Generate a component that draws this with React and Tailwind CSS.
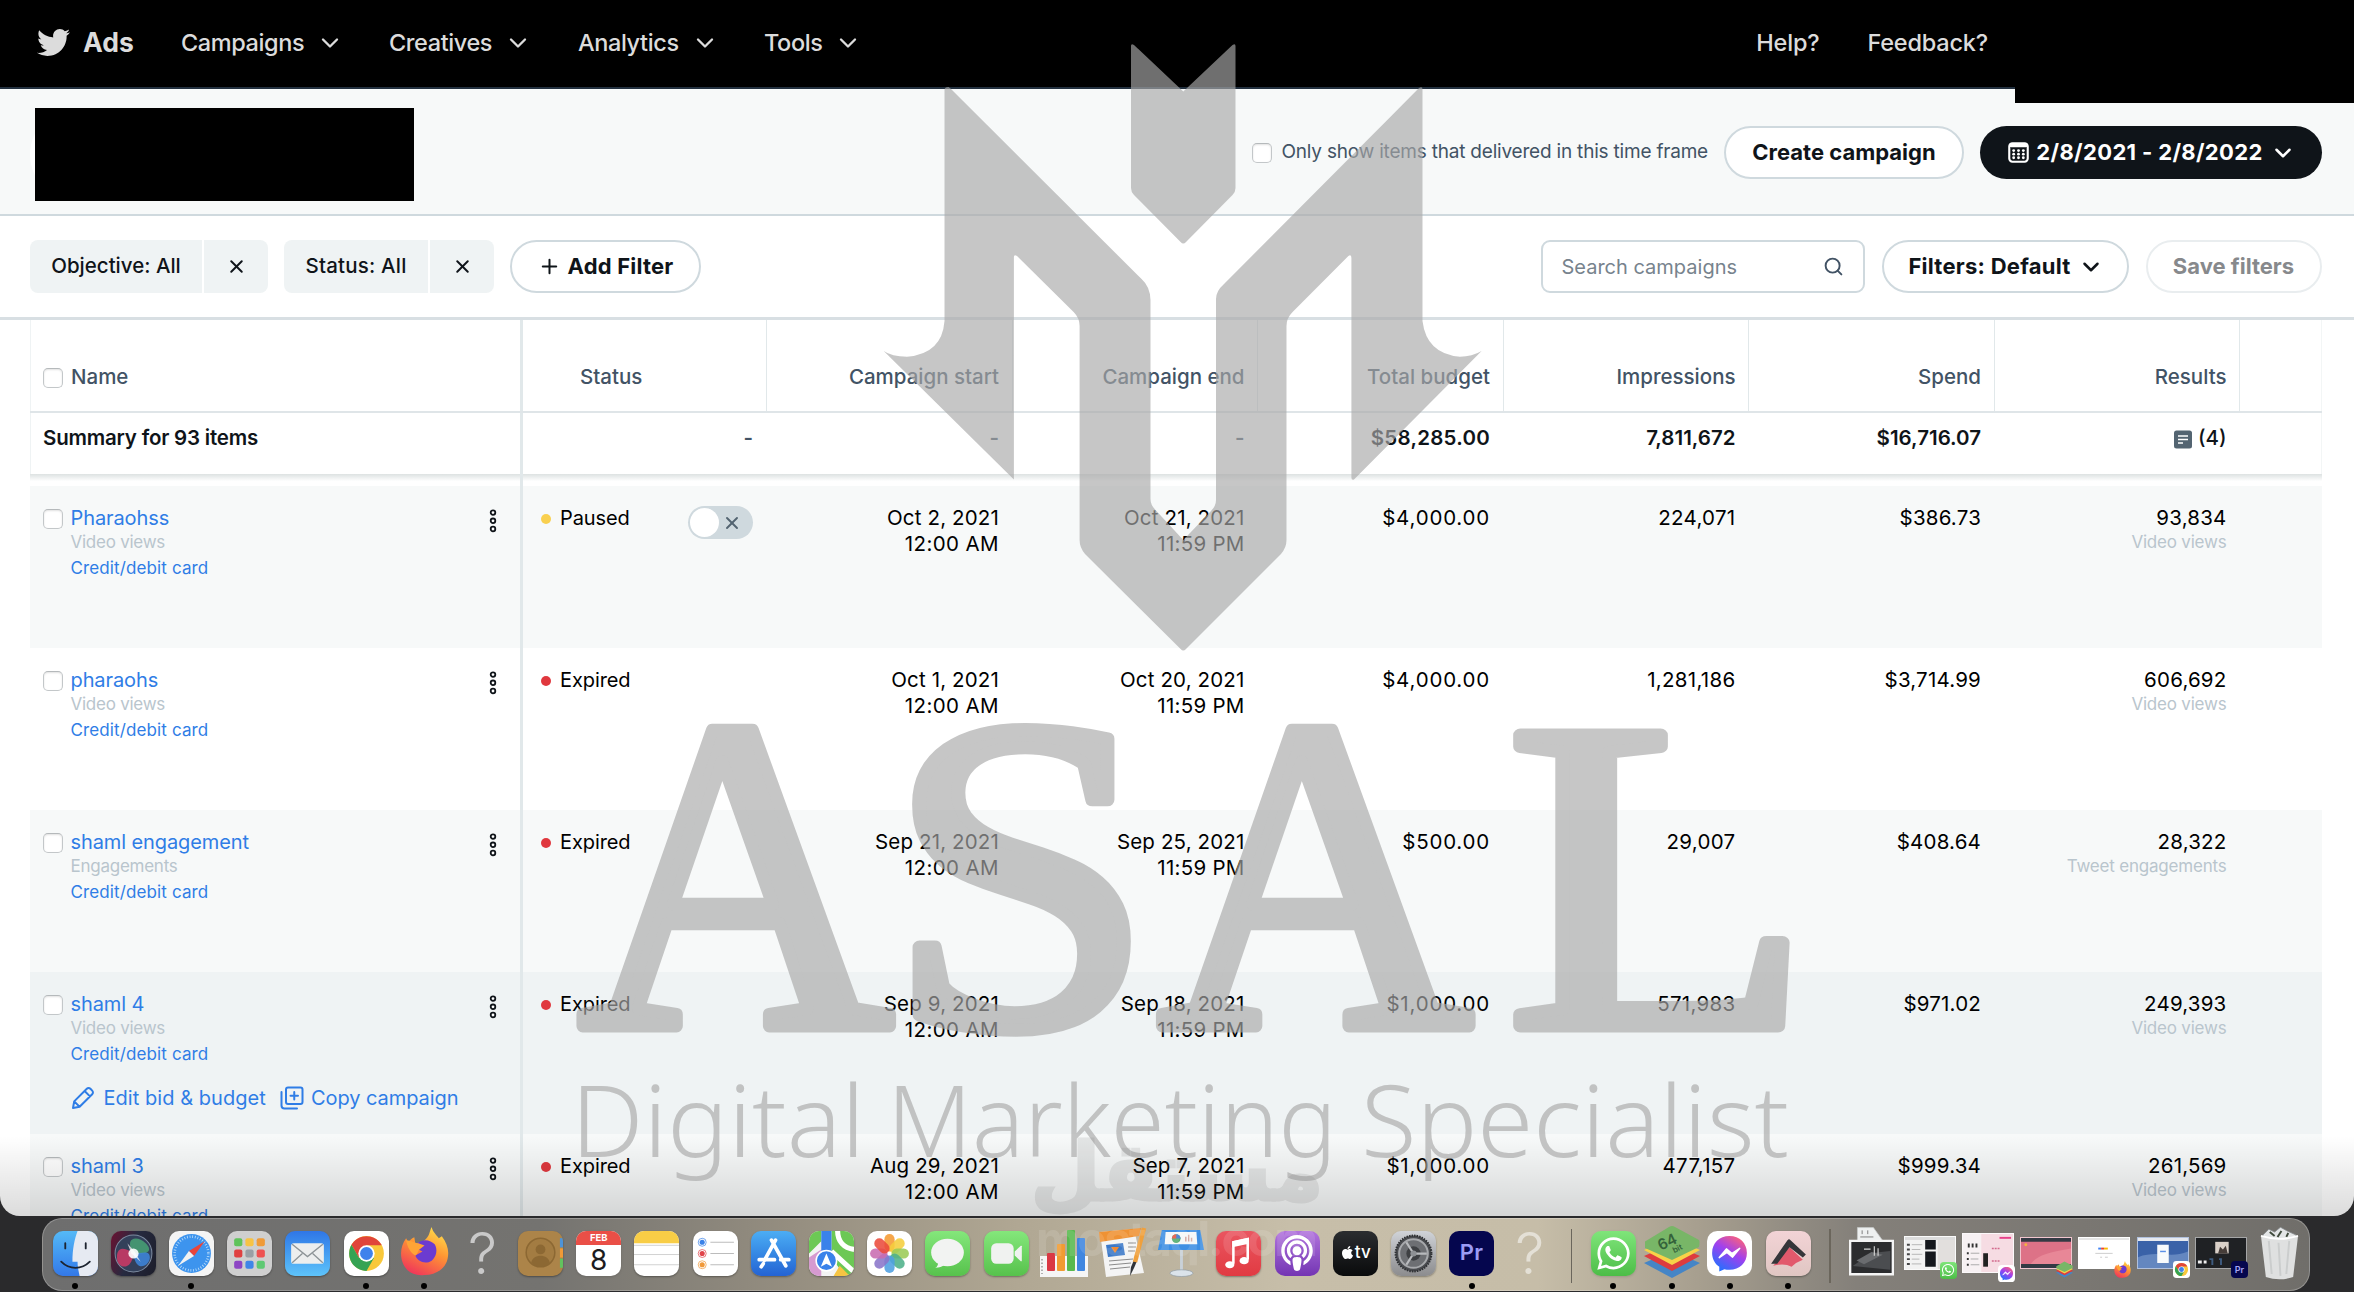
import { ChevronDown, Plus, Search, X } from 'lucide-react';
import { FaTwitter, FaWhatsapp, FaApple, FaPodcast } from 'react-icons/fa';

const campaigns = [
  { name: 'Pharaohss', objective: 'Video views', status: 'Paused', start: 'Oct 2, 2021', end: 'Oct 21, 2021', budget: '$4,000.00', impressions: '224,071', spend: '$386.73', results: '93,834' },
  { name: 'pharaohs', objective: 'Video views', status: 'Expired', start: 'Oct 1, 2021', end: 'Oct 20, 2021', budget: '$4,000.00', impressions: '1,281,186', spend: '$3,714.99', results: '606,692' },
  { name: 'shaml engagement', objective: 'Engagements', resultType: 'Tweet engagements', status: 'Expired', start: 'Sep 21, 2021', end: 'Sep 25, 2021', budget: '$500.00', impressions: '29,007', spend: '$408.64', results: '28,322' },
  { name: 'shaml 4', objective: 'Video views', status: 'Expired', start: 'Sep 9, 2021', end: 'Sep 18, 2021', budget: '$1,000.00', impressions: '571,983', spend: '$971.02', results: '249,393', hovered: true },
  { name: 'shaml 3', objective: 'Video views', status: 'Expired', start: 'Aug 29, 2021', end: 'Sep 7, 2021', budget: '$1,000.00', impressions: '477,157', spend: '$999.34', results: '261,569' },
];

const headers = ['Campaign start', 'Campaign end', 'Total budget', 'Impressions', 'Spend', 'Results'];

function Checkbox() {
  return <span className="block w-[20px] h-[20px] shrink-0 rounded-[5px] border border-[#c3c7c9] border-t-[#b5b9bb] bg-white shadow-[inset_0_1px_2px_rgba(0,0,0,0.12)]" />;
}

/* ---------- Top navigation ---------- */

function NavItem({ label, className }) {
  return (
    <div className={`flex items-center justify-between ${className}`}>
      <span>{label}</span>
      <ChevronDown className="w-[28px] h-[28px] -mr-[5px]" strokeWidth={2} />
    </div>
  );
}

function TopNav() {
  return (
    <nav className="h-[89px] shrink-0 bg-black flex items-start text-[#dcdcdc] text-[23.5px] font-medium tracking-[-0.4px] border-b-2 border-[#22303f]">
      <div className="h-[85px] w-full flex items-center pl-[37px]">
        <FaTwitter className="w-[33px] h-[33px]" />
        <span className="ml-[13px] w-[98px] text-[26.5px] font-bold tracking-normal">Ads</span>
        <NavItem label="Campaigns" className="w-[158px] mr-[50px]" />
        <NavItem label="Creatives" className="w-[138px] mr-[51px]" />
        <NavItem label="Analytics" className="w-[136px] mr-[50px]" />
        <NavItem label="Tools" className="w-[93px]" />
        <div className="ml-auto mr-[366px] flex gap-[48px] tracking-[-0.2px]">
          <span>Help?</span>
          <span>Feedback?</span>
        </div>
      </div>
    </nav>
  );
}

/* ---------- Account bar ---------- */

function CalendarIcon() {
  return (
    <svg viewBox="0 0 20 20" className="w-[21px] h-[21px]">
      <rect x="1.2" y="1.2" width="17.6" height="17.6" rx="3" fill="none" stroke="#fff" strokeWidth="2" />
      <rect x="1" y="1" width="18" height="4" rx="2" fill="#fff" />
      {[8.2, 11.6, 15].map((y) =>
        [5.4, 10, 14.6].map((x) => <circle key={`${x}-${y}`} cx={x} cy={y} r="1.35" fill="#fff" />)
      )}
    </svg>
  );
}

function AccountBar() {
  return (
    <div className="h-[127px] shrink-0 bg-[#f7f9f9] border-b-2 border-[#cfd9de] flex items-start">
      <div className="w-[384px] mt-[19px] ml-[30px] h-[93px] rounded-l-full bg-white pl-[5px]">
        <div className="w-[379px] h-[93px] bg-black" />
      </div>
      <div className="ml-auto flex items-center pt-[37px] pr-[32px]">
        <Checkbox />
        <span className="ml-[9px] mr-[16px] text-[19px] tracking-[-0.2px] text-[#425365] whitespace-nowrap">
          Only show items that delivered in this time frame
        </span>
        <button className="w-[240px] h-[53px] rounded-full border-2 border-[#cfd9de] bg-white text-[22px] font-bold text-[#0f1419]">
          Create campaign
        </button>
        <button className="ml-[16px] w-[342px] h-[53px] rounded-full bg-[#0f1419] text-white text-[22px] font-bold tracking-[0.35px] flex items-center justify-center gap-[7px] whitespace-nowrap">
          <CalendarIcon />
          2/8/2021 - 2/8/2022
          <ChevronDown className="w-[26px] h-[26px] -mr-[2px]" strokeWidth={2.3} />
        </button>
      </div>
    </div>
  );
}

/* ---------- Filter bar ---------- */

function FilterChip({ label, className }) {
  return (
    <div className="flex gap-[2px] h-[53px] mr-[16px] text-[20.5px] font-medium text-[#0f1419]">
      <div className={`rounded-l-[8px] bg-[#eff3f4] flex items-center justify-center ${className}`}>{label}</div>
      <div className="w-[64px] rounded-r-[8px] bg-[#eff3f4] flex items-center justify-center">
        <X className="w-[21px] h-[21px]" strokeWidth={2.3} />
      </div>
    </div>
  );
}

function FilterBar() {
  return (
    <div className="h-[104px] shrink-0 border-b-[3px] border-[#d8dfe3] bg-white flex items-center pl-[30px] pr-[32.5px]">
      <FilterChip label="Objective: All" className="w-[172px]" />
      <FilterChip label="Status: All" className="w-[144px] tracking-[0.2px]" />
      <button className="w-[191px] h-[53px] rounded-full border-2 border-[#cfd9de] text-[22px] font-bold tracking-[0.2px] text-[#0f1419] flex items-center justify-center gap-[7px]">
        <Plus className="w-[23px] h-[23px]" strokeWidth={2.1} />
        Add Filter
      </button>
      <div className="ml-auto w-[324px] h-[53px] rounded-[9px] border-2 border-[#cfd9de] flex items-center justify-between pl-[19px] pr-[19px] text-[20px] text-[#77838d]">
        Search campaigns
        <Search className="w-[21px] h-[21px] text-[#425365]" strokeWidth={2.2} />
      </div>
      <button className="ml-[17px] w-[247px] h-[53px] rounded-full border-2 border-[#cfd9de] text-[22px] font-bold tracking-[0.25px] text-[#0f1419] flex items-center justify-center gap-[7px]">
        Filters: Default
        <ChevronDown className="w-[26px] h-[26px] -mr-[2px]" strokeWidth={2.3} />
      </button>
      <button className="ml-[17px] w-[176px] h-[53px] rounded-full border-2 border-[#e9edef] text-[22px] font-bold text-[#87898c]">
        Save filters
      </button>
    </div>
  );
}

/* ---------- Campaign table ---------- */

function KebabIcon() {
  return (
    <svg viewBox="0 0 8 24" className="w-[8px] h-[24px]" fill="#fff" stroke="#0f1419" strokeWidth="1.8">
      <circle cx="4" cy="3.6" r="2.3" />
      <circle cx="4" cy="11.8" r="2.3" />
      <circle cx="4" cy="20" r="2.3" />
    </svg>
  );
}

function PencilIcon() {
  return (
    <svg viewBox="0 0 24 24" className="w-[24px] h-[24px]" fill="none" stroke="currentColor" strokeWidth="2" strokeLinejoin="round">
      <path d="M2 22l1.2-6.6L15.8 2.8c1-1 2.600-1 3.600 0l1.800 1.800c1 1 1 2.600 0 3.600L8.600 20.800 2 22zM13.600 5l5.400 5.400M3.200 15.400l5.400 5.400" />
    </svg>
  );
}

function CopyIcon() {
  return (
    <svg viewBox="0 0 24 24" className="w-[24px] h-[24px]" fill="none" stroke="currentColor" strokeWidth="2" strokeLinecap="round">
      <rect x="6" y="1.500" width="16.500" height="16.500" rx="2" />
      <path d="M14.250 6v7.500M10.500 9.750h7.500M1.500 6v13.500a3 3 0 0 0 3 3H17" />
    </svg>
  );
}

function Toggle() {
  return (
    <div className="ml-auto mt-px w-[65px] h-[33px] rounded-full bg-[#cfd9de] flex items-center p-[2px]">
      <div className="w-[29px] h-[29px] rounded-full bg-white" />
      <X className="ml-[3px] w-[20px] h-[20px] text-[#536471]" strokeWidth={2.3} />
    </div>
  );
}

function HeaderRow() {
  return (
    <div className="h-[93px] shrink-0 flex text-[20.5px] leading-[26px] font-medium text-[#425365] border-b-2 border-[#dfe5e8]">
      <div className="w-[493px] shrink-0 border-r-[3px] border-[#e1e8ea] border-l border-l-[#eff3f4] pl-[12px] pt-[44px] flex gap-[8px]">
        <div className="pt-[4px]"><Checkbox /></div>
        Name
      </div>
      <div className="w-[244px] shrink-0 border-r border-[#e1e8ea] pl-[57px] pt-[44px]">Status</div>
      {headers.map((h) => (
        <div key={h} className="w-[245.5px] shrink-0 border-r border-[#e1e8ea] pr-[12.5px] pt-[44px] text-right">{h}</div>
      ))}
      <div className="flex-1 border-r border-[#f3f6f6]" />
    </div>
  );
}

function NoteIcon() {
  return (
    <svg viewBox="0 0 18 18" className="w-[18px] h-[19px] mt-[5px]">
      <rect width="18" height="18" rx="2.500" fill="#536471" />
      <path d="M4 5.500h10M4 9h10M4 12.500h5" stroke="#fff" strokeWidth="1.500" />
    </svg>
  );
}

function SummaryRow() {
  const cell = 'w-[245.5px] shrink-0 pr-[13.5px] pt-[12px] text-right';
  return (
    <div className="h-[61px] shrink-0 flex text-[20.5px] leading-[26px] font-semibold text-[#0f1419]">
      <div className="w-[493px] shrink-0 border-r-[3px] border-[#e1e8ea] border-l border-l-[#eff3f4] pl-[12px] pt-[12px] tracking-[-0.2px]">
        Summary for 93 items
      </div>
      <div className="w-[244px] shrink-0 pr-[14px] pt-[12px] text-right text-[#425365]">-</div>
      <div className={`${cell} text-[#425365]`}>-</div>
      <div className={`${cell} text-[#425365]`}>-</div>
      <div className={`${cell} tracking-[0.25px]`}>$58,285.00</div>
      <div className={cell}>7,811,672</div>
      <div className={cell}>$16,716.07</div>
      <div className={`${cell} flex justify-end gap-[6px] font-medium`}>
        <NoteIcon />
        (4)
      </div>
      <div className="flex-1 border-r border-[#f3f6f6]" />
    </div>
  );
}

function CampaignRow({ c, index }) {
  const bg = c.hovered ? 'bg-[#eff3f4]' : index % 2 === 0 ? 'bg-[#f7f9f9]' : 'bg-white';
  const cell = 'w-[245.5px] shrink-0 pr-[13.5px] pt-[19px] text-right';
  return (
    <div className={`h-[162px] shrink-0 flex text-[20.5px] leading-[26px] text-black ${bg}`}>
      <div className="w-[493px] h-full shrink-0 border-r-[3px] border-[#e1e8ea] pl-[13px] pr-[23px] pt-[19px] flex items-start">
        <div className="pt-[4px]"><Checkbox /></div>
        <div className="ml-[7.5px] flex-1 text-[#2f7de6] tracking-[-0.1px]">
          <div className="text-[20px] leading-[26px]">{c.name}</div>
          <div className="text-[17px] leading-[22px] tracking-[-0.25px] text-[#b9c5cd]">{c.objective}</div>
          <div className="mt-[2px] text-[17px] leading-[26px] tracking-[0.12px]">Credit/debit card</div>
          {c.hovered && (
            <div className="mt-[18px] flex items-center text-[20px] leading-[26px] tracking-[0.05px] whitespace-nowrap">
              <PencilIcon />
              <span className="ml-[9px] mr-[14px]">Edit bid &amp; budget</span>
              <CopyIcon />
              <span className="ml-[7px] tracking-[-0.05px]">Copy campaign</span>
            </div>
          )}
        </div>
        <div className="-ml-[8px] pt-[4px]"><KebabIcon /></div>
      </div>
      <div className="w-[244px] shrink-0 pl-[18px] pr-[14px] pt-[19px] flex items-start">
        <span className={`mt-[9px] w-[10px] h-[10px] rounded-full ${c.status === 'Paused' ? 'bg-[#f9d04f]' : 'bg-[#e0383e]'}`} />
        <span className="ml-[9px] text-[20px] tracking-[-0.1px]">{c.status}</span>
        {c.status === 'Paused' && <Toggle />}
      </div>
      <div className={`${cell} tracking-[0.15px]`}>
        {c.start}
        <div className="tracking-[0.4px]">12:00 AM</div>
      </div>
      <div className={`${cell} tracking-[0.15px]`}>
        {c.end}
        <div className="tracking-[0.25px]">11:59 PM</div>
      </div>
      <div className={`${cell} tracking-[0.8px]`}>{c.budget}</div>
      <div className={`${cell} tracking-[0.3px]`}>{c.impressions}</div>
      <div className={`${cell} tracking-[0.2px]`}>{c.spend}</div>
      <div className={`${cell} tracking-[0.2px]`}>
        {c.results}
        <div className="text-[17px] leading-[22px] tracking-[-0.2px] text-[#b9c5cd]">{c.resultType || c.objective}</div>
      </div>
    </div>
  );
}

/* ---------- Dock ---------- */

function DockItem({ running, children }) {
  return (
    <div className="w-[58.2px] shrink-0 flex flex-col items-center pt-[11px]">
      <div className="h-[46px] flex items-center justify-center">{children}</div>
      {running && <span className="mt-[7px] w-[6px] h-[6px] rounded-full bg-black" />}
    </div>
  );
}

function Tile({ className, children }) {
  return (
    <div className={`w-[45px] h-[45px] rounded-[10px] overflow-hidden shadow-[0_1px_2px_rgba(0,0,0,0.35)] ${className}`}>
      {children && <svg viewBox="0 0 44 44" className="w-full h-full">{children}</svg>}
    </div>
  );
}

function Separator() {
  return (
    <div className="w-[25.5px] shrink-0 flex justify-center pt-[10px]">
      <span className="w-[1.5px] h-[54px] bg-[#6b665c]" />
    </div>
  );
}

function Chrome({ x = 22, y = 22, r = 17 }) {
  return (
    <g transform={`translate(${x} ${y}) scale(${r / 17})`}>
      <circle r="17" fill="#f9c83b" />
      <path d="M-14.700-8.500A17 17 0 0 1 14.700-8.500L14.700-8H0L-7.400 4.200z" fill="#e0453a" />
      <path d="M-14.700-8.500A17 17 0 0 0 0 17L7.400 4.200H-7.400z" fill="#35a353" />
      <circle r="8" fill="#fff" />
      <circle r="6.300" fill="#3f82ec" />
    </g>
  );
}

function Firefox({ className }) {
  return (
    <svg viewBox="0 0 48 50" className={className}>
      <defs>
        <linearGradient id="ffx" x1="0.8" y1="0" x2="0.3" y2="1">
          <stop offset="0" stopColor="#ffe14d" />
          <stop offset="0.45" stopColor="#ff9633" />
          <stop offset="1" stopColor="#f0365a" />
        </linearGradient>
      </defs>
      <path d="M31 1c1 5 5 8 7 11l3-2c5 7 7 13 6 20-1 11-11 18-23 18C10 50 1 40 1 27c0-6 2-11 5-15l2 4c2-2 3-4 6-5l1 6c5-1 8-1 11-5 3-3 3-7 5-11z" fill="url(#ffx)" />
      <path d="M17 17c6-5 13-3 17 1 3 5 2 12-3 16-6 4-14 1-16-5l7-4-4-2z" fill="#6b3bd0" />
      <path d="M6 14c5 0 8 3 12 3l6 2-5 4c-2 2-1 4-4 6-4-2-8-8-9-15z" fill="#ffa436" />
    </svg>
  );
}

function BlueStacks({ className, label }) {
  return (
    <svg viewBox="0 0 56 52" className={className}>
      <path d="M0 37l28-12 28 12-28 15z" fill="#4585c6" />
      <path d="M0 30l28-12 28 12-28 15z" fill="#dd3c3f" />
      <path d="M0 24l28-12 28 12-28 15z" fill="#f8d248" />
      <path d="M1 15.500L25 1q3-2 6 0l24 13q1 1.500 0 7L28 34 1 22z" fill="#78b667" />
      {label && (
        <g transform="rotate(-26 28 16)" fill="#34623a" fontFamily="Inter" fontWeight="600">
          <text x="14" y="19" fontSize="15">64</text>
          <text x="25" y="27" fontSize="8">bit</text>
        </g>
      )}
    </svg>
  );
}

function Messenger({ className }) {
  return (
    <svg viewBox="0 0 44 44" className={className}>
      <defs>
        <linearGradient id="msgr" x1="0.2" y1="1" x2="0.8" y2="0">
          <stop offset="0" stopColor="#1b74ff" />
          <stop offset="0.55" stopColor="#a040ee" />
          <stop offset="1" stopColor="#ff6376" />
        </linearGradient>
      </defs>
      <rect width="44" height="44" rx="10" fill="#fff" />
      <path d="M22 5c10 0 17 7 17 16.500S32 38 22 38c-2 0-3.500-.3-5-.7L12 39.500V35C7.500 32 5 27 5 21.500 5 12 12 5 22 5z" fill="url(#msgr)" />
      <path d="M12 26l7-8.500 5.500 4.500L32 17l-7 8.500-5.500-4.500z" fill="#fff" stroke="#fff" strokeWidth="1.500" strokeLinejoin="round" />
    </svg>
  );
}

function Whatsapp({ className, icon }) {
  return (
    <div className={`rounded-[22%] bg-gradient-to-b from-[#7fe57a] to-[#4cbd47] flex items-center justify-center ${className}`}>
      <FaWhatsapp className={`text-white ${icon}`} />
    </div>
  );
}

// Minimised window with the badge of the app that owns it
function Thumb({ className, children, badge }) {
  return (
    <div className="relative">
      <div className={`w-[52px] overflow-hidden border border-white/60 ${className}`}>{children}</div>
      <div className="absolute -right-px -bottom-[9px] w-[17px] h-[18px] flex items-center justify-center">{badge}</div>
    </div>
  );
}

const petals = ['#f59b33', '#f5ce3e', '#9bcb57', '#4fb08a', '#4f9fe0', '#8a75c9', '#c86bb0', '#ea4b3c'];
const pads = ['#5fc35a', '#f7c344', '#f09a37', '#e04141', '#9a9fa5', '#ee5252', '#8e46c4', '#3f86e8', '#5fc973'];

function Dock() {
  return (
    <div className="h-[76px] px-[42px] pt-[2px]">
      <div className="w-[2268px] h-[73px] rounded-[20px] border border-white/25 pl-[3px] flex bg-[linear-gradient(90deg,#6e6e6e_0%,#747370_22%,#958e80_33%,#b0a793_43%,#c7bea9_55%,#c6bda8_66%,#a79f8f_73%,#84807a_80%,#706e6a_100%)]">
        <DockItem running>
          <Tile className="bg-gradient-to-b from-[#55b9f7] to-[#3478e8]">
            <path d="M24 0h20v44H26c-1-5-2-9-2-14h-5C19 18 21 8 24 0z" fill="#e6eaf2" />
            <path d="M12 12v5M32 12v5M8 30c8 8 20 8 28 0" stroke="#1d2430" strokeWidth="1.800" fill="none" strokeLinecap="round" />
          </Tile>
        </DockItem>
        <DockItem>
          <Tile className="bg-[linear-gradient(110deg,#6b1231,#262a40_45%,#1c1d2a)]">
            <circle cx="22" cy="22" r="18" fill="#33405a" stroke="#7d8ba0" strokeWidth="1" />
            <path d="M22 22C8 12 5 20 6 28s14 12 16-6z" fill="#d03a66" opacity="0.85" />
            <path d="M22 22C12 6 26 4 34 12s0 12-12 10z" fill="#49a777" opacity="0.8" />
            <path d="M22 22c8 0 16-4 16 4s-14 16-16-4z" fill="#3d83d6" opacity="0.9" />
            <circle cx="22" cy="22" r="5" fill="#fff" opacity="0.9" />
            <path d="M16 12l7 8 6 10-9-8z" fill="#fff" opacity="0.7" />
          </Tile>
        </DockItem>
        <DockItem running>
          <Tile className="bg-[#f4f4f4]">
            <circle cx="22" cy="22" r="19" fill="#3d94ee" />
            <circle cx="22" cy="22" r="16.500" fill="none" stroke="#b9dcfa" strokeWidth="2.500" strokeDasharray="0.8 1.800" />
            <path d="M35 10L24.500 24.500 19.500 19.500z" fill="#e8453c" />
            <path d="M9 34l10.500-14.500 5 5z" fill="#f2f2f2" />
          </Tile>
        </DockItem>
        <DockItem>
          <Tile className="bg-[#cfcfcf]">
            {pads.map((p, i) => (
              <rect key={i} x={7 + (i % 3) * 11} y={7 + Math.floor(i / 3) * 11} width="8" height="8" rx="2" fill={p} />
            ))}
          </Tile>
        </DockItem>
        <DockItem>
          <Tile className="bg-gradient-to-b from-[#3076e6] to-[#5ec3fa]">
            <rect x="6" y="12" width="32" height="20" rx="2.500" fill="#eceeee" />
            <path d="M7 13l15 12 15-12M7 31l10-9M37 31l-10-9" fill="none" stroke="#8d9497" strokeWidth="1.300" />
          </Tile>
        </DockItem>
        <DockItem running>
          <Tile className="bg-white"><Chrome /></Tile>
        </DockItem>
        <DockItem running><Firefox className="w-[49px] h-[51px] -mt-[3px]" /></DockItem>
        <DockItem><span className="text-[58px] leading-[46px] font-light text-[#c9c9c9]">?</span></DockItem>
        <DockItem>
          <Tile className="bg-[#ac8449]">
            <rect x="41" y="7" width="3" height="9" fill="#4d93d9" />
            <rect x="41" y="17" width="3" height="9" fill="#f09a37" />
            <rect x="41" y="27" width="3" height="9" fill="#62c25e" />
            <circle cx="22" cy="21" r="14" fill="#a37c42" stroke="#8c6833" strokeWidth="1.500" />
            <circle cx="22" cy="18" r="4.800" fill="#8c6833" />
            <path d="M13 31c1-9 17-9 18 0-5 5-13 5-18 0z" fill="#8c6833" />
          </Tile>
        </DockItem>
        <DockItem>
          <div className="w-[45px] h-[45px] rounded-[10px] overflow-hidden bg-white flex flex-col items-center shadow">
            <div className="w-full h-[14px] bg-[#ea4f47] text-white text-[9.500px] leading-[14px] font-bold text-center">FEB</div>
            <div className="text-[28px] leading-[31px] text-[#1c1c1e]">8</div>
          </div>
        </DockItem>
        <DockItem>
          <Tile className="bg-white">
            <rect width="44" height="12" fill="#f8cd46" />
            <path d="M0 14h44M0 23h44M0 33h44" stroke="#c8c8c8" strokeWidth="0.800" />
          </Tile>
        </DockItem>
        <DockItem>
          <Tile className="bg-white">
            {['#3b82e8', '#e0444a', '#f0993a'].map((f, i) => (
              <g key={f}>
                <circle cx="9" cy={11 + i * 11} r="2.500" fill={f} />
                <circle cx="9" cy={11 + i * 11} r="3.900" fill="none" stroke={f} strokeWidth="0.700" />
                <path d={`M17 ${11 + i * 11}h23`} stroke="#bcbcbc" strokeWidth="1.200" />
              </g>
            ))}
          </Tile>
        </DockItem>
        <DockItem>
          <Tile className="bg-gradient-to-b from-[#4cadf4] to-[#2563d3]">
            <path d="M24 9L13 29M20 9l14 25M8 28h15M29 28h8M12 32l-2 3" stroke="#fff" strokeWidth="3.600" strokeLinecap="round" />
          </Tile>
        </DockItem>
        <DockItem>
          <Tile className="bg-[#f3f3f3]">
            <path d="M0 0h12v10L0 22zM22 0h22v44h-9L22 26z" fill="#6cc855" />
            <path d="M0 44V26l12-8v26z" fill="#d69ad0" />
            <path d="M24 44l6-10 10 10z" fill="#f6c443" />
            <path d="M12 0h10v22H12z" fill="#3a82ea" />
            <path d="M22 20L44 40M28 0c0 10 6 17 16 18" stroke="#fff" strokeWidth="5" fill="none" />
            <circle cx="17" cy="29" r="10" fill="#3a82ea" stroke="#fff" strokeWidth="1.500" />
            <path d="M17 22l5.500 13-5.500-3-5.500 3z" fill="#fff" />
          </Tile>
        </DockItem>
        <DockItem>
          <Tile className="bg-white">
            {petals.map((p, i) => (
              <rect key={p} x="17" y="3" width="10" height="17" rx="5" fill={p} opacity="0.88" transform={`rotate(${i * 45} 22 22)`} />
            ))}
          </Tile>
        </DockItem>
        <DockItem>
          <Tile className="bg-gradient-to-b from-[#84e77b] to-[#57c24c]">
            <ellipse cx="22" cy="21" rx="16" ry="13.500" fill="#f2f3f2" />
            <path d="M13 30c0 3-1 5-3 6 4 0 7-1 9-3z" fill="#f2f3f2" />
          </Tile>
        </DockItem>
        <DockItem>
          <Tile className="bg-gradient-to-b from-[#84e77b] to-[#57c24c]">
            <rect x="7" y="12" width="22" height="20" rx="5" fill="#f0f2f0" />
            <path d="M30 20l6-5.500q1-.5 1 .5v14q0 1-1 .5L30 24z" fill="#f0f2f0" />
          </Tile>
        </DockItem>
        <DockItem>
          <svg viewBox="0 0 50 50" className="w-[50px] h-[50px]">
            <path d="M1 28h48v21H1z" fill="#f5f5f5" />
            <path d="M3 31v15" stroke="#999" strokeWidth="1.500" strokeDasharray="1.500 2" />
            <rect x="8" y="25" width="8" height="18" rx="1" fill="#da3844" />
            <rect x="18" y="16" width="8" height="27" rx="1" fill="#f19b32" />
            <rect x="28" y="2" width="8" height="41" rx="1" fill="#58b94e" />
            <rect x="38" y="10" width="8" height="33" rx="1" fill="#3f86e0" />
          </svg>
        </DockItem>
        <DockItem>
          <svg viewBox="0 0 50 52" className="w-[50px] h-[52px]">
            <path d="M3 5l34-3 10 44-38 4z" fill="#f4f4f4" />
            <path d="M2 5l42-4-2 8-39 6z" fill="#ef9234" />
            <path d="M9 18l17-2 2 12-17 2z" fill="#3b78c8" />
            <path d="M14 20h8l-4 6z" fill="#ee8a35" />
            <path d="M31 16h8M31 20h8M31 24h7M12 34l24-2M12 38l22-2M13 42l20-2" stroke="#8b8b8b" strokeWidth="1" />
            <path d="M37 33l-3 7-1 9 4-8 3-7z" fill="#30343a" />
            <path d="M47 1L38 35" stroke="#f0a03c" strokeWidth="4.500" />
          </svg>
        </DockItem>
        <DockItem>
          <svg viewBox="0 0 50 52" className="w-[48px] h-[52px]">
            <path d="M24 20h3v27h-3z" fill="#c9d1d8" />
            <ellipse cx="25.500" cy="47" rx="12" ry="3.500" fill="#dbe3ea" stroke="#8d99a3" strokeWidth="0.700" />
            <path d="M5 2h40l4 21H1z" fill="#3e8fe3" />
            <path d="M9 4h32l1 13H8z" fill="#f5f7f8" />
            <circle cx="20" cy="11" r="4.500" fill="#4faa6b" />
            <path d="M20 11V6.500A4.500 4.500 0 0 1 24.500 11z" fill="#3878d0" />
            <path d="M20 11l-4.500 0A4.500 4.500 0 0 1 20 6.500z" fill="#e6533f" />
            <path d="M30 14V9M33 14V7M36 14v-4" stroke="#d4a8a2" strokeWidth="1.500" />
          </svg>
        </DockItem>
        <DockItem>
          <Tile className="bg-gradient-to-b from-[#ea5560] to-[#e13a42]">
            <path d="M17 32V11l14-3v20" fill="none" stroke="#fff" strokeWidth="2.500" />
            <path d="M16 10l16-3.500v6L16 16z" fill="#fff" />
            <ellipse cx="13.500" cy="33" rx="4.500" ry="3.500" fill="#fff" />
            <ellipse cx="27.500" cy="29" rx="4.500" ry="3.500" fill="#fff" />
          </Tile>
        </DockItem>
        <DockItem>
          <div className="w-[45px] h-[45px] rounded-[10px] bg-gradient-to-b from-[#b273dd] to-[#7434b3] flex items-center justify-center">
            <FaPodcast className="w-[36px] h-[36px] text-white" />
          </div>
        </DockItem>
        <DockItem>
          <div className="w-[45px] h-[45px] rounded-[10px] bg-gradient-to-b from-[#2b2d30] to-[#0a0b0c] text-white flex items-center justify-center pb-px">
            <FaApple className="w-[15px] h-[15px]" />
            <span className="text-[17px] leading-none font-medium">tv</span>
          </div>
        </DockItem>
        <DockItem>
          <Tile className="bg-gradient-to-b from-[#d0d3d8] to-[#8c8c8e]">
            <circle cx="22" cy="22" r="17.500" fill="#4a4c50" stroke="#2f3134" strokeWidth="2" strokeDasharray="1.500 1" />
            <circle cx="22" cy="22" r="14" fill="#6d6f73" stroke="#a7a9ac" strokeWidth="2" />
            <circle cx="22" cy="22" r="7" fill="#3e4043" />
            <path d="M22 22h13M22 22L15 11M22 22l-7 11" stroke="#b8babd" strokeWidth="2.200" />
            <circle cx="22" cy="22" r="3" fill="#8d9094" />
          </Tile>
        </DockItem>
        <DockItem running>
          <div className="w-[45px] h-[45px] rounded-[10px] bg-[#05064e] text-[#9a9bf5] text-[22px] leading-[43px] font-semibold text-center tracking-[0.5px]">Pr</div>
        </DockItem>
        <DockItem><span className="text-[58px] leading-[46px] font-light text-[#e4e0d6]">?</span></DockItem>

        <Separator />

        <DockItem running><Whatsapp className="w-[45px] h-[45px] shadow" icon="w-[37px] h-[37px]" /></DockItem>
        <DockItem running><BlueStacks label className="w-[56px] h-[52px] -mt-[2px]" /></DockItem>
        <DockItem running><Messenger className="w-[45px] h-[45px]" /></DockItem>
        <DockItem running>
          <Tile className="bg-gradient-to-b from-[#f2d3d6] to-[#e0c6c2]">
            <path d="M23 16l13 12q-6 2-11 7-7-4-18-1z" fill="#e2596c" />
            <path d="M5 32L21 9q1.500-2 3 0l15 14-3 3-13-10L11 32z" fill="#35363a" />
          </Tile>
        </DockItem>

        <Separator />

        <DockItem>
          <svg viewBox="0 0 48 52" className="w-[45px] h-[50px] -mt-[4px]">
            <path d="M9 1h17l10 14H9z" fill="#eef0f0" stroke="#c5c8c8" strokeWidth="0.800" />
            <path d="M14 4v4M20 4v4M12 11h14" stroke="#777" strokeWidth="1" />
            <path d="M0 14h48v38H0z" fill="#f4f4f4" />
            <path d="M2.500 16.500h43v33h-43z" fill="#2b2c2e" />
            <path d="M4 42l20-14 20-2v20z" fill="#4b4d50" />
            <path d="M8 36l16-9 12 3-20 10z" fill="#6a6c6f" />
            <path d="M16 24h7M27 21v10M31 23v8" stroke="#d8d8d8" strokeWidth="1.200" />
          </svg>
        </DockItem>
        <DockItem>
          <Thumb className="h-[34px] bg-[#f2f2f2]" badge={<Whatsapp className="w-[17px] h-[17px]" icon="w-[14px] h-[14px]" />}>
            <svg viewBox="0 0 52 34">
              <path d="M0 0h52v3H0z" fill="#dcdcdc" />
              <path d="M2 8h3M2 13h3M2 18h3M2 23h3M2 28h3" stroke="#444" strokeWidth="2" />
              <path d="M7 8h11M7 13h9M7 18h11M7 23h8M7 28h10" stroke="#b5b5b5" strokeWidth="1" />
              <path d="M21 3h11v10H21zM21 15h11v16H21z" fill="#15181d" />
              <path d="M34 3h18v31H34z" fill="#e2dfdd" />
            </svg>
          </Thumb>
        </DockItem>
        <DockItem>
          <Thumb className="h-[40px] bg-[#f7f1f3]" badge={<Messenger className="w-[17px] h-[17px]" />}>
            <svg viewBox="0 0 52 40">
              <path d="M19 0h33v40H19z" fill="#f6dce3" />
              <path d="M38 4h12" stroke="#e8408a" strokeWidth="2" />
              <path d="M6 10v4M10 10v4M14 10v4M4 20h2M4 26h2M4 32h2" stroke="#333" strokeWidth="2" />
              <path d="M8 20h9M8 26h8M8 32h9" stroke="#aaa" strokeWidth="1" />
              <path d="M21 20h5v14h-5z" fill="#222" />
              <path d="M30 15l8 0M30 28h8" stroke="#d26a8d" strokeWidth="1.500" strokeDasharray="2 1" />
            </svg>
          </Thumb>
        </DockItem>
        <DockItem>
          <Thumb className="h-[32px] bg-[#dd7287]" badge={<BlueStacks className="w-[21px] h-[19px]" />}>
            <svg viewBox="0 0 52 32">
              <path d="M0 0h52v4H0zM0 27h52v5H0z" fill="#343a44" />
              <path d="M10 27c8-10 20-12 42-16v16z" fill="#e88797" />
              <circle cx="5" cy="7" r="1.500" fill="#f5b23d" />
            </svg>
          </Thumb>
        </DockItem>
        <DockItem>
          <Thumb className="h-[32px] bg-white" badge={<Firefox className="w-[18px] h-[19px]" />}>
            <svg viewBox="0 0 52 32">
              <path d="M0 0h52v2H0z" fill="#e5e5e5" />
              <path d="M20 11h3" stroke="#4285f4" strokeWidth="2" />
              <path d="M23 11h3" stroke="#ea4335" strokeWidth="2" />
              <path d="M26 11h4" stroke="#fbbc05" strokeWidth="2" />
              <path d="M17 16h18M22 20h2M27 20h3" stroke="#ccc" strokeWidth="1" />
            </svg>
          </Thumb>
        </DockItem>
        <DockItem>
          <Thumb
            className="h-[32px] bg-[#3a62a8]"
            badge={<svg viewBox="0 0 44 44" className="w-[17px] h-[17px]"><rect width="44" height="44" rx="9" fill="#fff" /><Chrome /></svg>}
          >
            <svg viewBox="0 0 52 32">
              <path d="M0 0h52v3H0z" fill="#e6e9ef" />
              <path d="M0 20c20-8 34 2 52-6v18H0z" fill="#6487c0" />
              <path d="M20 7h12v19H20z" fill="#f8fafc" />
              <path d="M23 14h6" stroke="#5b8fe6" strokeWidth="1.500" />
            </svg>
          </Thumb>
        </DockItem>
        <DockItem>
          <Thumb
            className="h-[32px] bg-[#1f2124] border-[#55585c]"
            badge={<span className="w-[17px] h-[17px] rounded-[4px] bg-[#05064e] text-[#a5a6f6] text-[9px] leading-[17px] font-semibold text-center">Pr</span>}
          >
            <svg viewBox="0 0 52 32">
              <path d="M20 4h14v12H20z" fill="#d9d0c8" />
              <path d="M23 16l2-7 3 3 3-4 2 8z" fill="#453c38" />
              <path d="M2 25h4M8 25h3" stroke="#eee" strokeWidth="3" />
              <path d="M14 22h3v6M24 22h2v6" stroke="#3f5c80" strokeWidth="2" fill="none" />
            </svg>
          </Thumb>
        </DockItem>
        <DockItem>
          <svg viewBox="0 0 40 54" className="w-[39px] h-[53px]">
            <path d="M3 8l6-6 6 3 6-5 7 4 9 4-3 6H5z" fill="#e3e5e6" stroke="#85898b" strokeWidth="0.800" />
            <path d="M10 5l5 4M22 4l-4 6M29 6l-2 4" stroke="#3f4a3c" strokeWidth="2" />
            <path d="M1 9q19 6 38 0l-5 42q-14 5-28 0z" fill="#dfe0e0" />
            <path d="M1 9q19 6 38 0" stroke="#fff" strokeWidth="1.800" fill="none" />
            <path d="M9 14l3 34M30 14l-3 34M19 16l2 34" stroke="#cbcdcd" strokeWidth="2" />
          </svg>
        </DockItem>
      </div>
    </div>
  );
}

/* ---------- Watermark laid over the whole screen ---------- */

function Watermark() {
  return (
    <svg viewBox="0 0 2354 1292" className="absolute left-0 top-0 w-[2354px] h-[1292px] pointer-events-none">
      <g fill="#a9a9a9" opacity="0.66">
        <path d="M1131 46q0-3 3-1l49.300 46.500L1232.500 45q3-2 3 1V188q0 4-3 7L1186 242q-2.700 3-5.400 0L1134 195q-3-3-3-7z" />
        <path d="M944.500 90q0-3 4-3L951 89 1141.600 279q8.900 8 8.900 22V499q0 6 5 11L1183.300 540 1211 511q5-5 5-11V299q0-8 8-15L1418.500 88.500q4-3 4 1V321q4 33 37.500 35.700 12 0 21.600-5.700L1354 479.600q-2.600 1-2.600-2V258q0-4-3-2L1292.600 312q-6.100 6-6.100 14V540q0 8-6 14.500L1186 649q-2.700 3-5.400 0L1085.500 554.500q-5.900-6.500-5.900-14.500V326q0-8-6-14L1017 256q-3-2-3.100 1V479.600L883.700 351q8 5.700 23.300 5.700 35-2.700 37.500-35.700z" />
        <g fontFamily="Liberation Serif" fontSize="448" stroke="#a9a9a9" strokeWidth="13" strokeLinejoin="round">
          <text transform="translate(578.500 1026) scale(0.972 1)">A</text>
          <text transform="translate(887 1026) scale(1.070 1)">S</text>
          <text transform="translate(1158 1026) scale(0.972 1)">A</text>
          <text transform="translate(1506 1026) scale(1.120 0.992)">L</text>
        </g>
        <g fontFamily="Noto Sans" fontWeight="300" fontSize="100">
          <text x="571" y="1157" textLength="294" lengthAdjust="spacingAndGlyphs">Digital</text>
          <text x="887" y="1157" textLength="450" lengthAdjust="spacingAndGlyphs">Marketing</text>
          <text x="1361" y="1157" textLength="428" lengthAdjust="spacingAndGlyphs">Specialist</text>
        </g>
      </g>
      <text x="1177" y="1200" textAnchor="middle" direction="rtl" fontFamily="DejaVu Sans" fontWeight="700" fontSize="80" fill="#6b6b6b" stroke="#6b6b6b" strokeWidth="3" opacity="0.14">مستقل</text>
      <text x="1036" y="1256" fontFamily="Inter, sans-serif" fontWeight="700" fontSize="48" textLength="282" fill="#fff" opacity="0.12">mostaql.com</text>
    </svg>
  );
}

export default function App() {
  return (
    <div className="relative w-[2354px] h-[1292px] overflow-hidden bg-[#2a2a2c] font-[Inter,sans-serif]">
      <div className="relative h-[1216px] rounded-b-[20px] overflow-hidden bg-white flex flex-col">
        <TopNav />
        <AccountBar />
        <FilterBar />
        <div className="w-[2292px] shrink-0 ml-[30px] flex flex-col">
          <HeaderRow />
          <SummaryRow />
          <div className="h-[12px] shrink-0 bg-gradient-to-b from-[#dde2e2] to-white to-60%">
            <div className="w-[493px] h-full border-r-[3px] border-[#e1e8ea]" />
          </div>
          {campaigns.map((c, i) => <CampaignRow key={c.name} c={c} index={i} />)}
        </div>
        <div className="absolute right-0 top-0 w-[339px] h-[103px] bg-black" />
        <div className="absolute inset-x-0 bottom-0 h-[80px] bg-gradient-to-b from-transparent to-black/14" />
      </div>
      <Dock />
      <Watermark />
    </div>
  );
}
